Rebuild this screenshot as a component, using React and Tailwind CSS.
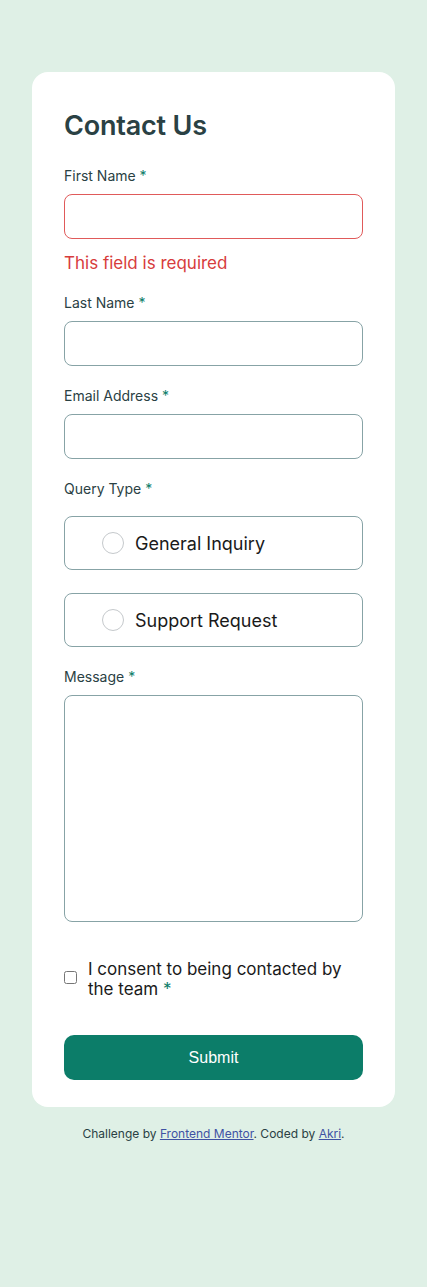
import React from 'react';

const font = { fontFamily: 'Inter, "Noto Sans", sans-serif' };

const Label = ({ children }) => (
  <label className="block text-[14px] leading-[20px] text-[#2a4144] mb-2">
    {children} <span className="text-[#0c7d69]">*</span>
  </label>
);

const Input = ({ error }) => (
  <input
    type="text"
    className={`block w-full h-[45px] rounded-lg border bg-white px-4 outline-none ${
      error ? 'border-[#e05a5a]' : 'border-[#87a3a6]'
    }`}
  />
);

const Radio = ({ label }) => (
  <label className="flex items-center h-[54px] rounded-lg border border-[#87a3a6] pl-[37px] cursor-pointer">
    <span className="w-[22px] h-[22px] rounded-full border border-[#c5c9cc] bg-white" />
    <span className="ml-[11px] text-[18px] text-[#1a1a1a]">{label}</span>
  </label>
);

export default function App() {
  return (
    <div className="min-h-[1287px] bg-[#dff0e6] pt-[72px] px-8" style={font}>
      <form className="bg-white rounded-2xl px-8 pt-[38px] pb-[27px]" onSubmit={(e) => e.preventDefault()}>
        <h1 className="text-[27px] leading-[32px] font-semibold text-[#2a4144] tracking-[-0.2px]">Contact Us</h1>

        <div className="mt-[24px]">
          <Label>First Name</Label>
          <Input error />
          <p className="mt-3 text-[17px] leading-[24px] text-[#d73c3c]">This field is required</p>
        </div>

        <div className="mt-[18px]">
          <Label>Last Name</Label>
          <Input />
        </div>

        <div className="mt-5">
          <Label>Email Address</Label>
          <Input />
        </div>

        <div className="mt-5">
          <label className="block text-[14px] leading-[20px] text-[#2a4144] mb-[17px]">
            Query Type <span className="text-[#0c7d69]">*</span>
          </label>
          <div className="flex flex-col gap-[23px]">
            <Radio label="General Inquiry" />
            <Radio label="Support Request" />
          </div>
        </div>

        <div className="mt-5">
          <Label>Message</Label>
          <textarea className="block w-full h-[227px] rounded-lg border border-[#87a3a6] resize-none outline-none p-3" />
        </div>

        <div className="mt-[37px] flex items-start gap-[11px]">
          <input id="consent" type="checkbox" className="mt-[12px] w-[13px] h-[13px] shrink-0" />
          <label htmlFor="consent" className="text-[17px] leading-[20px] text-[#1a1a1a] cursor-pointer">
            I consent to being contacted by the team<span className="text-[#0c7d69]"> *</span>
          </label>
        </div>

        <button
          type="submit"
          className="mt-[36px] w-full h-[45px] rounded-[10px] bg-[#0c7d69] text-white text-[16px]"
          style={{ fontFamily: '"Liberation Sans", Arial, sans-serif' }}
        >
          Submit
        </button>
      </form>

      <p className="mt-[19px] text-center text-[12px] leading-[16px] text-[#2a4144]">
        Challenge by{' '}
        <a href="#" className="text-[#3e52a3] underline">Frontend Mentor</a>. Coded by{' '}
        <a href="#" className="text-[#3e52a3] underline">Akri</a>.
      </p>
    </div>
  );
}
